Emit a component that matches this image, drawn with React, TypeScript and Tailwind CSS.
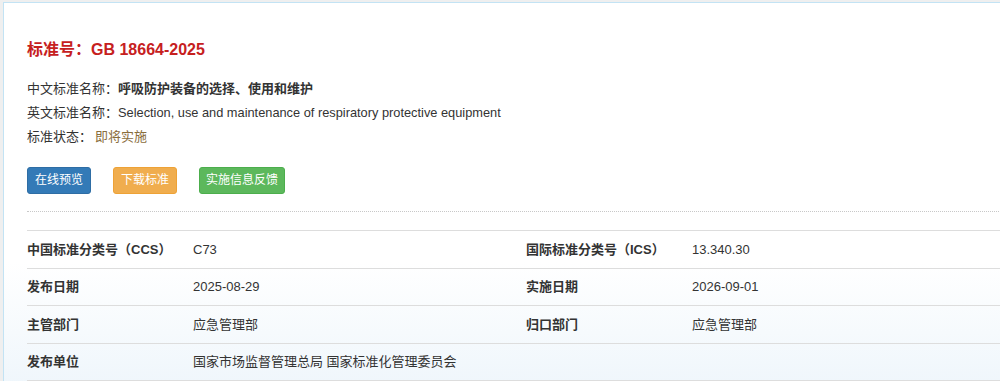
const font = { fontFamily: '"Liberation Sans", "Noto Sans CJK SC", sans-serif' };

const rows: [string, string, string, string][] = [
	["中国标准分类号（CCS）", "C73", "国际标准分类号（ICS）", "13.340.30"],
	["发布日期", "2025-08-29", "实施日期", "2026-09-01"],
	["主管部门", "应急管理部", "归口部门", "应急管理部"],
	["发布单位", "国家市场监督管理总局 国家标准化管理委员会", "", ""],
];

function InfoLine({ label, children }: { label: string; children: React.ReactNode }) {
	return (
		<div className="h-6 leading-6 text-[13px] text-[#333] whitespace-nowrap">
			{label}
			{children}
		</div>
	);
}

export default function App() {
	return (
		<div
			className="w-[1000px] h-[381px] overflow-hidden bg-[#efefef] pt-[2px] pl-[3px]"
			style={font}
		>
			<div className="w-[1100px] h-[400px] border-t border-l border-[#c3e3f4] bg-gradient-to-b from-white from-65% to-[#edf5fb] pl-[23px] pt-[35px]">
				<h1 className="h-6 leading-6 text-[16px] font-bold text-[#c6201e]">
					标准号：GB 18664-2025
				</h1>

				<div className="mt-[15px]">
					<InfoLine label="中文标准名称：">
						<span className="font-bold">呼吸防护装备的选择、使用和维护</span>
					</InfoLine>
					<InfoLine label="英文标准名称：">
						<span className="text-[12.8px]">
							Selection, use and maintenance of respiratory protective equipment
						</span>
					</InfoLine>
					<InfoLine label="标准状态：">
						<span className="ml-[3px] text-[#8a6d3b]">即将实施</span>
					</InfoLine>
				</div>

				<div className="mt-[18px] flex gap-[22px]">
					<button className="h-[27px] px-[7px] text-[12px] leading-[25px] text-white rounded-[3px] border border-[#2e6da4] bg-[#337ab7]">
						在线预览
					</button>
					<button className="h-[27px] px-[7px] text-[12px] leading-[25px] text-white rounded-[3px] border border-[#eea236] bg-[#f0ad4e]">
						下载标准
					</button>
					<button className="h-[27px] px-[6px] text-[12px] leading-[25px] text-white rounded-[3px] border border-[#4cae4c] bg-[#5cb85c]">
						实施信息反馈
					</button>
				</div>

				<div className="mt-[17px] border-t border-dotted border-[#c8c8c8]" />

				<div className="mt-[18px] w-[998px] border-t border-[#dddddd]">
					{rows.map((r, i) => (
						<div
							key={i}
							className="grid grid-cols-[166px_333px_166px_333px] h-[37.5px] items-center border-b border-[#dddddd] text-[13px] text-[#333]"
						>
							<div className="font-bold whitespace-nowrap">{r[0]}</div>
							<div className="whitespace-nowrap">{r[1]}</div>
							<div className="font-bold whitespace-nowrap">{r[2]}</div>
							<div className="whitespace-nowrap">{r[3]}</div>
						</div>
					))}
				</div>
			</div>
		</div>
	);
}
